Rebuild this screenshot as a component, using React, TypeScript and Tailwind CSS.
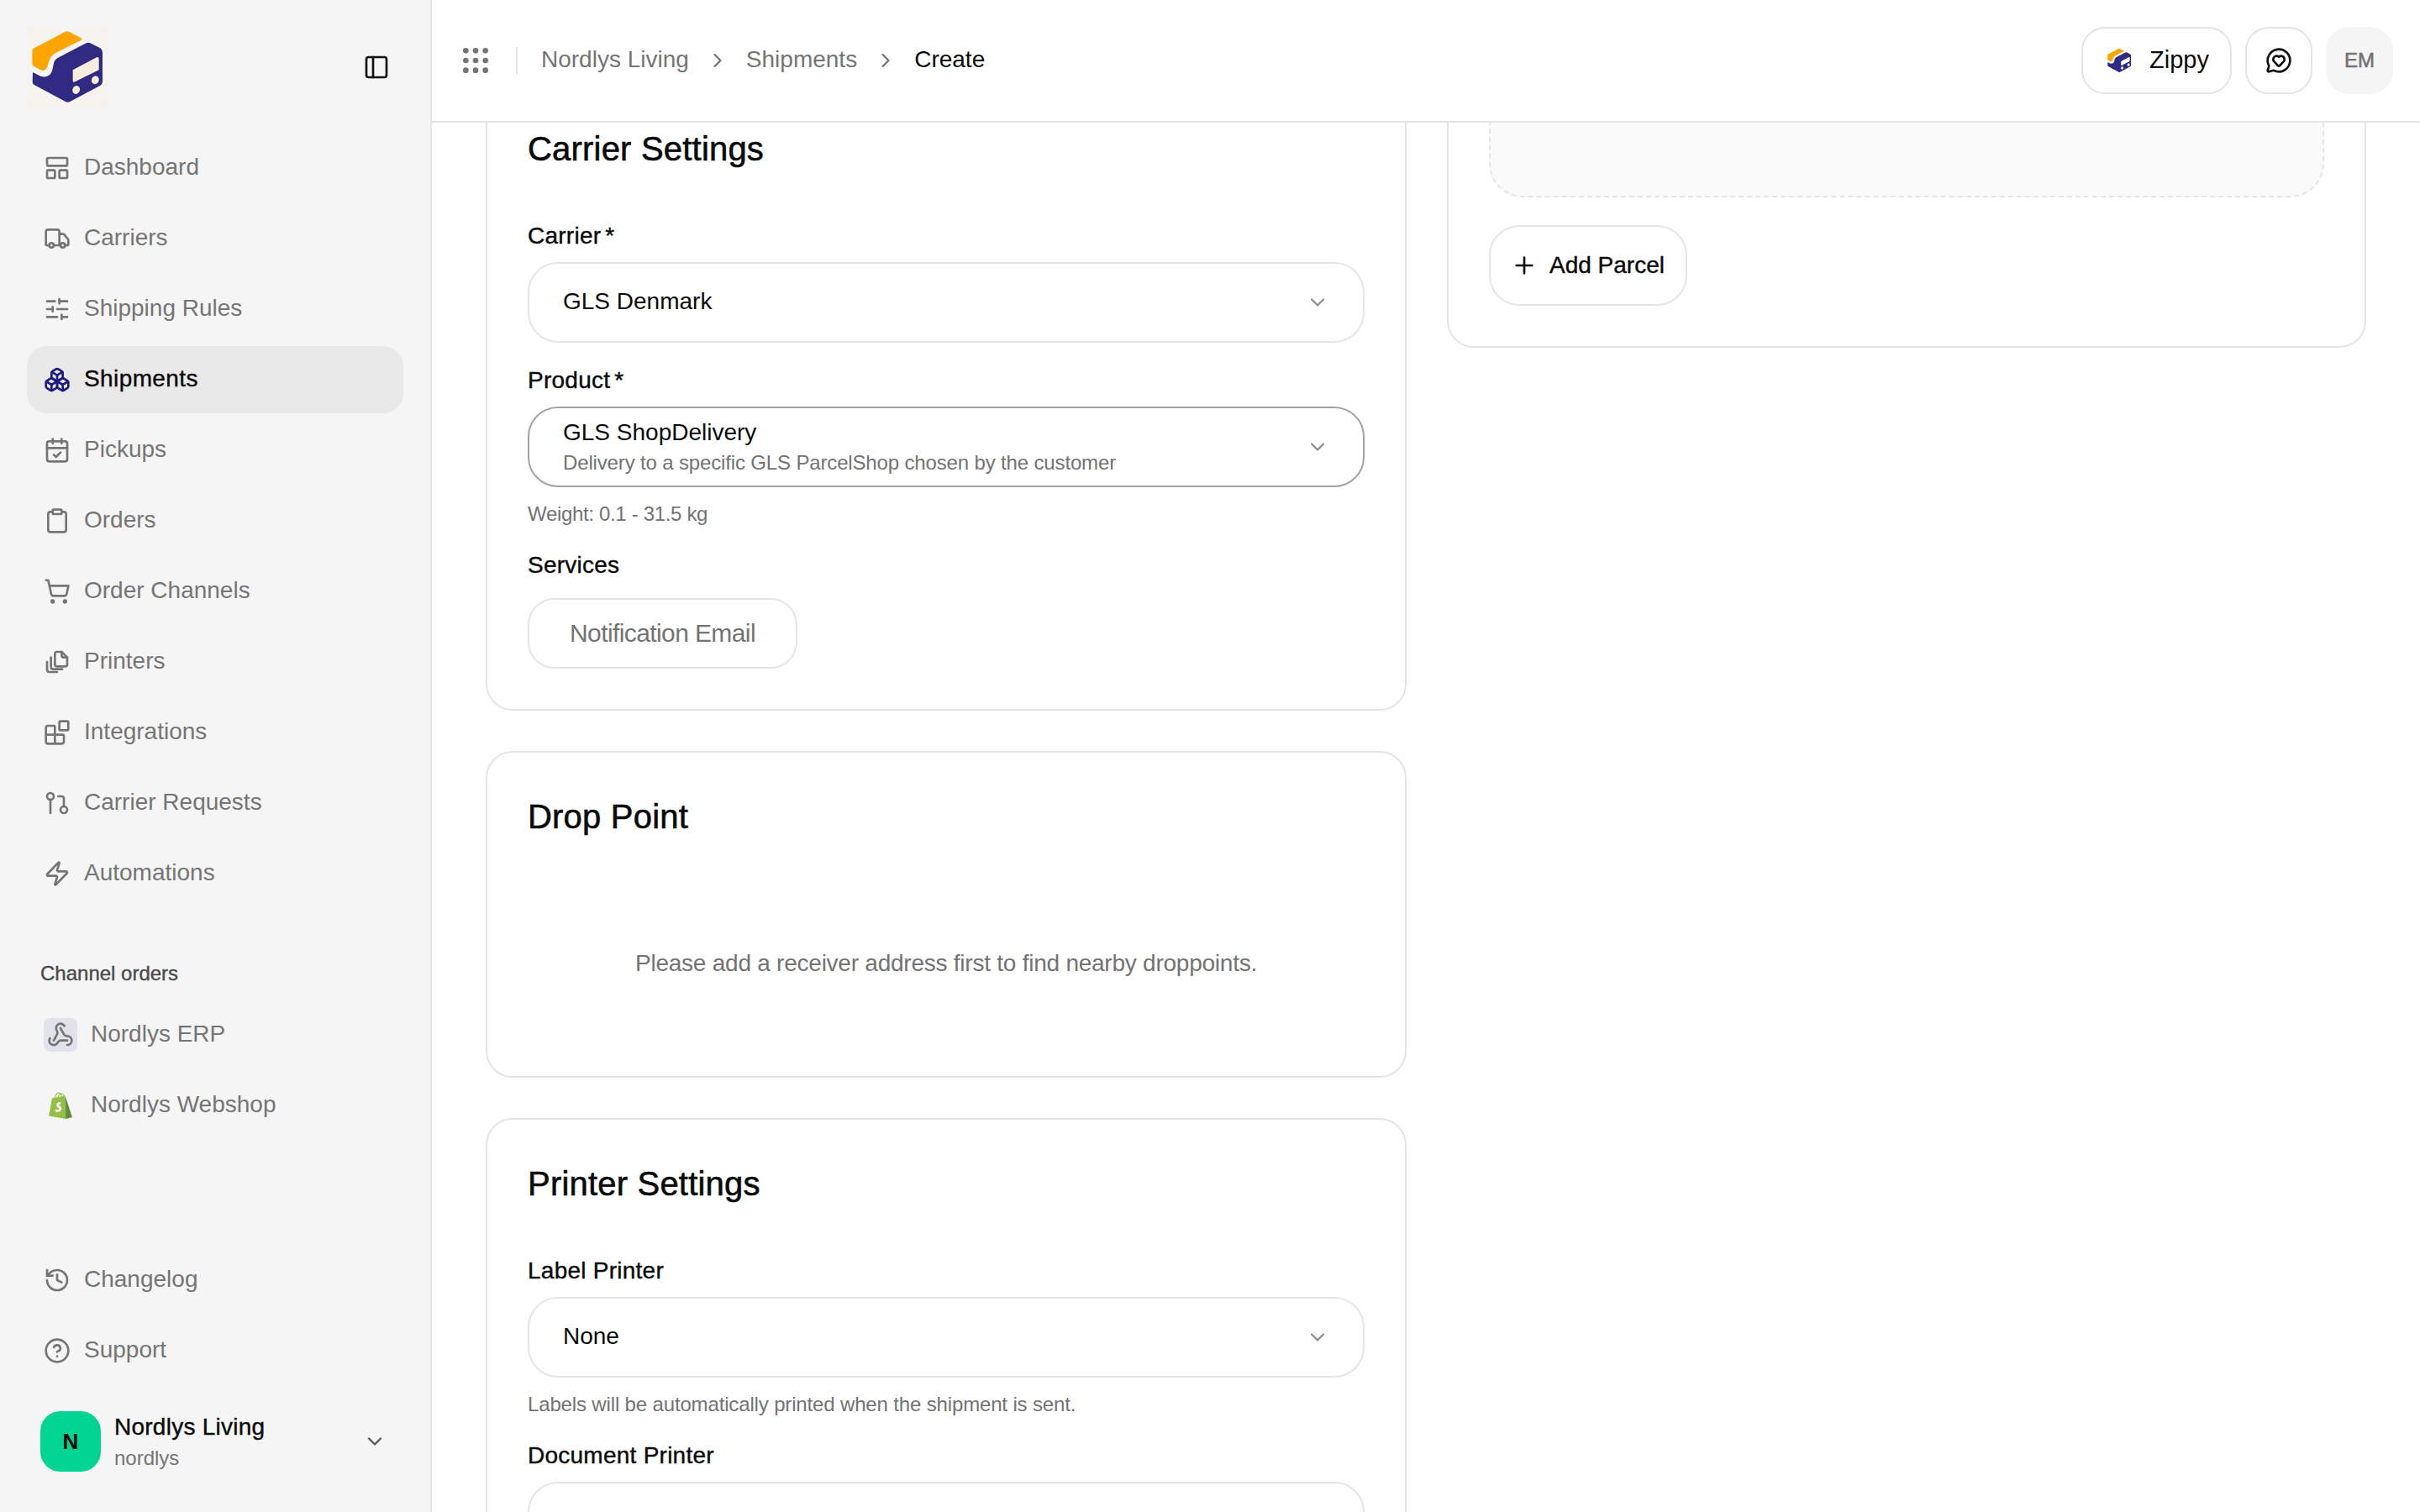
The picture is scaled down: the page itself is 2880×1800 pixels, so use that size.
import type { ReactNode } from "react"
import {
  Blocks,
  Boxes,
  CalendarCheck,
  ChevronDown,
  ChevronRight,
  CircleHelp,
  Clipboard,
  GitPullRequest,
  Grip,
  History,
  LayoutPanelTop,
  MessageCircleHeart,
  PanelLeft,
  Plus,
  ShoppingCart,
  SlidersHorizontal,
  Truck,
  Webhook,
  Zap,
} from "lucide-react"

const medium = "[-webkit-text-stroke:0.4px]"

/** Printers icon, no package has this exact one */
const PrinterDocs = ({ className }: { className?: string }) => (
  <svg viewBox="0 0 24 24" fill="none" stroke="currentColor" strokeWidth="2" strokeLinecap="round" strokeLinejoin="round" className={className}>
    <path d="M10 5a2 2 0 0 1 2-2h4l5 5v6a2 2 0 0 1-2 2h-7a2 2 0 0 1-2-2z" />
    <path d="M16 3v3a2 2 0 0 0 2 2h3" />
    <path d="M6.500 8v8.500a2 2 0 0 0 2 2h8" />
    <path d="M3 12v7a2 2 0 0 0 2 2h7" />
  </svg>
)

const Logo = ({ className, cutout = "#f8eddd" }: { className?: string; cutout?: string }) => (
  <svg viewBox="0 0 360 360" className={className}>
    <path
      d="M62 112L172 54Q180 50 188 54L230 76Q235 80 230 83L140 128Q118 140 113 165Q106 200 85 190L62 178Q55 174 55 168V122Q55 116 62 112Z"
      fill="#ffa500"
    />
    <path
      d="M57 198L85 212Q118 222 127 190L132 165Q135 152 150 145L245 95Q255 90 265 95L298 112Q306 118 306 126V232Q306 240 298 245L190 303Q182 307 174 303L62 243Q56 240 56 232Z"
      fill="#312a82"
    />
    <path d="M200 190L285 145Q293 142 293 150V190L208 232Q200 236 200 228Z" fill={cutout} />
    <ellipse cx="212" cy="261" rx="13" ry="15" transform="rotate(25 212 261)" fill={cutout} />
    <ellipse cx="280" cy="226" rx="13" ry="15" transform="rotate(25 280 226)" fill={cutout} />
  </svg>
)

const ShopifyBag = () => (
  <svg viewBox="0 0 28 32" className="h-8 w-7">
    <path d="M19.500 4.500L4 7.500 0 28.500 20 32z" fill="#95bf47" />
    <path d="M19.500 4.500L28 30 20 32z" fill="#5e8e3e" />
    <path d="M7 8c0-4 3-7 5-7s3 2 3 4M11 7c0-3 2-5 4-5s3 2 3 4" fill="none" stroke="#95bf47" strokeWidth="1.2" />
    <path
      d="M14.500 12.600c-1-.5-4.500-.8-5.200 2.400-.6 3.400 3.800 3.600 3.300 5.400-.3 1.100-2.600.9-4-.2l-.8 2.700c1.700 1.100 6.600 1.500 7.400-2.500.6-3.500-3.800-3.900-3.400-5.300.2-.8 1.500-.8 2.300-.3z"
      fill="#fff"
    />
  </svg>
)

const navItems = [
  { label: "Dashboard", icon: LayoutPanelTop },
  { label: "Carriers", icon: Truck },
  { label: "Shipping Rules", icon: SlidersHorizontal },
  { label: "Shipments", icon: Boxes, active: true },
  { label: "Pickups", icon: CalendarCheck },
  { label: "Orders", icon: Clipboard },
  { label: "Order Channels", icon: ShoppingCart },
  { label: "Printers", icon: PrinterDocs },
  { label: "Integrations", icon: Blocks },
  { label: "Carrier Requests", icon: GitPullRequest },
  { label: "Automations", icon: Zap },
]

const footerItems = [
  { label: "Changelog", icon: History },
  { label: "Support", icon: CircleHelp },
]

const NavRow = ({ label, icon: Icon, active }: { label: string; icon: typeof Truck | typeof PrinterDocs; active?: boolean }) => (
  <div
    className={`flex h-20 items-center gap-4 rounded-3xl px-5 text-[28px] leading-10 ${
      active ? `bg-[#e9e9e9] tracking-[0.4px] text-[#0a0a0a] ${medium}` : "text-[#757575]"
    }`}
  >
    <Icon className={`h-8 w-8 shrink-0 ${active ? "text-[#1e1b80]" : "text-[#757575]"}`} />
    <span className="pb-[2px]">{label}</span>
  </div>
)

const ChannelRow = ({ icon, label }: { icon: ReactNode; label: string }) => (
  <div className="flex h-20 items-center gap-4 px-5 text-[28px] leading-10 text-[#757575]">
    <div className="flex h-10 w-10 shrink-0 items-center justify-center">{icon}</div>
    <span className="pb-[2px]">{label}</span>
  </div>
)

const Sidebar = () => (
  <aside className="flex h-full w-[514px] shrink-0 flex-col border-r-2 border-[#e5e5e5] bg-[#f5f5f5] pt-8 pb-12">
    <div className="flex h-24 items-center justify-between pl-8 pr-[48px]">
      <div className="relative h-24 w-24 bg-[radial-gradient(circle,#f5f5f5_55%,#f8f1e6_100%)]">
        <Logo className="absolute -left-3 -top-3 h-[120px] w-[120px]" />
      </div>
      <PanelLeft className="h-8 w-8 text-[#111111]" />
    </div>

    <nav className="mt-8 flex flex-col gap-1 px-8">
      {navItems.map((item) => (
        <NavRow key={item.label} {...item} />
      ))}
    </nav>

    <div className={`mt-[63px] pl-12 text-2xl leading-8 text-[#4a4a4a] ${medium}`}>Channel orders</div>
    <div className="mt-[17px] flex flex-col gap-1 px-8">
      <ChannelRow
        label="Nordlys ERP"
        icon={
          <div className="flex h-10 w-10 items-center justify-center rounded-lg bg-[#e2e3ea]">
            <Webhook className="h-8 w-8 text-[#757575]" />
          </div>
        }
      />
      <ChannelRow label="Nordlys Webshop" icon={<ShopifyBag />} />
    </div>

    <div className="mt-auto flex flex-col gap-1 px-8">
      {footerItems.map((item) => (
        <NavRow key={item.label} {...item} />
      ))}
    </div>

    <div className="mt-8 flex items-center pl-12 pr-[52px]">
      <div className="flex h-[72px] w-[72px] items-center justify-center rounded-3xl bg-[#00d492] text-[26px] font-bold text-[#0a0a0a]">N</div>
      <div className="ml-4 flex flex-col">
        <span className={`pb-[2px] text-[28px] leading-[38px] tracking-[0.25px] text-[#0a0a0a] ${medium}`}>Nordlys Living</span>
        <span className="text-2xl leading-8 text-[#757575]">nordlys</span>
      </div>
      <ChevronDown className="ml-auto h-7 w-7 text-[#555555]" />
    </div>
  </aside>
)

const Topbar = () => (
  <header className="flex h-[146px] shrink-0 items-center border-b-2 border-[#e5e5e5] bg-white pl-8 pr-8">
    <Grip className="h-10 w-10 text-[#757575]" />
    <div className="ml-7 h-8 w-[2px] bg-[#e5e5e5]" />
    <div className="ml-7 flex items-center gap-5 text-[28px] leading-10 text-[#757575]">
      <span className="pb-[2px]">Nordlys Living</span>
      <ChevronRight className="h-7 w-7" />
      <span className="pb-[2px]">Shipments</span>
      <ChevronRight className="h-7 w-7" />
      <span className="pb-[2px] text-[#0a0a0a]">Create</span>
    </div>
    <div className="ml-auto flex items-center gap-4">
      <div className="flex h-20 w-[179px] items-center rounded-[28px] border-2 border-[#e5e5e5] pl-[23px] text-[29px] text-[#0a0a0a]">
        <Logo className="h-10 w-10" cutout="#ffffff" />
        <span className="ml-4">Zippy</span>
      </div>
      <div className="flex h-20 w-20 items-center justify-center rounded-[28px] border-2 border-[#e5e5e5]">
        <MessageCircleHeart className="h-8 w-8 text-[#111111]" />
      </div>
      <div className="flex h-20 w-20 items-center justify-center rounded-[28px] bg-[#f5f5f5] text-2xl text-[#737373] [-webkit-text-stroke:0.6px]">EM</div>
    </div>
  </header>
)

const Card = ({ title, children, className }: { title?: string; children: ReactNode; className?: string }) => (
  <section className={`rounded-[32px] border-2 border-[#e5e5e5] bg-white p-12 ${className ?? ""}`}>
    {title && <h2 className="text-[40px] leading-14 tracking-[0.2px] text-[#0a0a0a] [-webkit-text-stroke:0.6px]">{title}</h2>}
    {children}
  </section>
)

const Label = ({ children, className }: { children: ReactNode; className?: string }) => (
  <div className={`h-10 text-[28px] leading-[42px] tracking-[0.25px] text-[#0a0a0a] ${medium} ${className ?? ""}`}>{children}</div>
)

const SelectBox = ({ value, sub, focused }: { value?: string; sub?: string; focused?: boolean }) => (
  <div
    className={`mt-3 flex h-24 items-center justify-between rounded-[36px] border-2 bg-white pl-10 pr-10 ${
      focused ? "border-[#a3a3a3]" : "border-[#e5e5e5]"
    }`}
  >
    <div className="flex flex-col text-[28px] text-[#0a0a0a]">
      <span className={sub ? "pt-[2px] leading-9" : "pb-[2px] leading-10"}>{value}</span>
      {sub && <span className="text-2xl leading-9 tracking-[-0.15px] text-[#737373]">{sub}</span>}
    </div>
    <ChevronDown className="h-7 w-7 text-[#8f8f8f]" />
  </div>
)

const Help = ({ children, className }: { children: ReactNode; className?: string }) => (
  <p className={`mt-4 text-2xl leading-8 tracking-[-0.15px] text-[#737373] ${className ?? ""}`}>{children}</p>
)

const App = () => (
  <div className="flex h-screen overflow-hidden bg-white font-['Liberation_Sans',sans-serif]">
    <Sidebar />
    <main className="flex min-w-0 flex-1 flex-col">
      <Topbar />
      <div className="flex-1 overflow-hidden px-16">
        {/* scrolled content: the tops of the first cards sit under the header */}
        <div className="-mt-[47px] grid grid-cols-[1096px_1fr] items-start gap-12">
          <div className="flex flex-col gap-12">
            <Card title="Carrier Settings">
              <Label className="mt-[55px] [word-spacing:-3px]">Carrier *</Label>
              <SelectBox value="GLS Denmark" />
              <Label className="mt-6 [word-spacing:-3px]">Product *</Label>
              <SelectBox
                value="GLS ShopDelivery"
                sub="Delivery to a specific GLS ParcelShop chosen by the customer"
                focused
              />
              <Help className="tracking-[-0.33px]">Weight: 0.1 - 31.5 kg</Help>
              <Label className="mt-6">Services</Label>
              <div className="mt-5 flex h-[84px] w-[321px] items-center justify-center rounded-[32px] border-2 border-[#e5e5e5] pb-[2px] text-[30px] tracking-[-0.02em] text-[#737373]">
                Notification Email
              </div>
            </Card>

            <Card title="Drop Point">
              <p className="pt-[127px] pb-[66px] text-center text-[28px] leading-10 tracking-[-0.24px] text-[#737373]">
                Please add a receiver address first to find nearby droppoints.
              </p>
            </Card>

            <Card title="Printer Settings">
              <Label className="mt-[55px]">Label Printer</Label>
              <SelectBox value="None" />
              <Help>Labels will be automatically printed when the shipment is sent.</Help>
              <Label className="mt-6">Document Printer</Label>
              <SelectBox />
            </Card>
          </div>

          <Card className="-mt-[60px]">
            <div className="h-[146px] rounded-[40px] border-2 border-dashed border-[#e5e5e5] bg-[#fafafa]" />
            <div className={`mt-[33px] flex h-24 w-[236px] items-center gap-[14px] rounded-[36px] border-2 border-[#e5e5e5] pl-[24px] text-[28px] text-[#0a0a0a] ${medium}`}>
              <Plus className="h-8 w-8" />
              <span>Add Parcel</span>
            </div>
          </Card>
        </div>
      </div>
    </main>
  </div>
)

export default App
